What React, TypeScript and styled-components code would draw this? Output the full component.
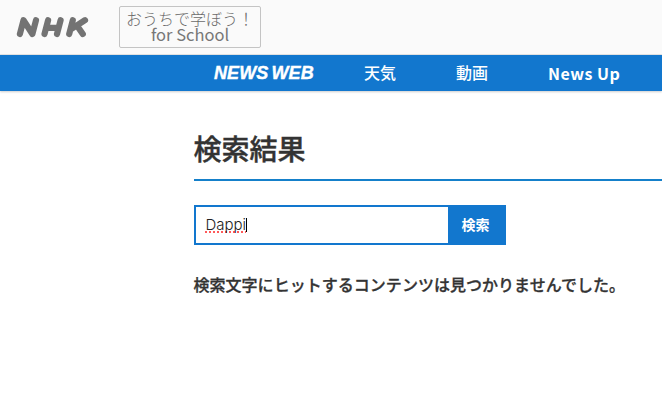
import { createGlobalStyle, styled } from "styled-components";

const App = () => {
  return (
    <>
      <GlobalStyle />
      <Header>
        <Logo viewBox="0 0 74 22" role="img" aria-label="NHK">
          <path d="M3.9 18 7.5 4.2 16.4 18 20 4.2M28.5 18 32.1 4.2M41 18 44.6 4.2M30.2 11.8H42.6M53.2 18 56.8 4.2M69 4.2 55.4 13M61.6 10.4 66.8 18" />
        </Logo>
        <SchoolLink>
          <SchoolText>おうちで学ぼう！</SchoolText>
          <SchoolName>for School</SchoolName>
        </SchoolLink>
      </Header>
      <Nav>
        <NewsWeb>NEWS WEB</NewsWeb>
        <NavItem>天気</NavItem>
        <NavItem>動画</NavItem>
        <NavItem $latin>News Up</NavItem>
      </Nav>
      <Main>
        <Title>検索結果</Title>
        <SearchForm onSubmit={(e) => e.preventDefault()}>
          <SearchField>
            <Query>Dappi</Query>
            <Caret />
          </SearchField>
          <SearchButton>検索</SearchButton>
        </SearchForm>
        <Message>検索文字にヒットするコンテンツは見つかりませんでした。</Message>
      </Main>
    </>
  );
};

export default App;

const GlobalStyle = createGlobalStyle`
  * {
    box-sizing: border-box;
  }

  body {
    margin: 0;
    background: #fff;
    color: #333;
    font-family: "Noto Sans CJK JP", sans-serif;
    overflow: hidden;
  }
`;

const Header = styled.header`
  display: flex;
  align-items: flex-start;
  height: 55px;
  padding: 6px 0 0 16px;
  background: #fafafa;
  border-bottom: 1px solid #e4e4e4;
`;

const Logo = styled.svg`
  width: 74px;
  height: 22px;
  margin-top: 10px;
  fill: none;
  stroke: #737373;
  stroke-width: 6.2;
  stroke-linecap: round;
  stroke-linejoin: round;
`;

const SchoolLink = styled.a`
  width: 142px;
  height: 42px;
  margin-left: 29px;
  padding-top: 3px;
  border: 1px solid #c4c4c4;
  border-radius: 2px;
  color: #777;
  font-size: 16px;
  line-height: 17px;
  white-space: nowrap;
`;

const SchoolText = styled.div`
  padding-left: 6px;
  color: #6a6a6a;
  font-weight: 300;
  line-height: 16px;
`;

const SchoolName = styled.div`
  font-size: 16.5px;
  text-align: center;
`;

const Nav = styled.nav`
  display: flex;
  align-items: center;
  height: 36px;
  padding-left: 214px;
  background: #1277ce;
  box-shadow: 0 1px 2px rgba(0, 0, 0, 0.2);
  color: #fff;
  white-space: nowrap;
`;

const NewsWeb = styled.a`
  width: 90px;
  font: italic bold 18px "Liberation Sans", sans-serif;
  letter-spacing: 0.1px;
  word-spacing: -2px;
  -webkit-text-stroke: 0.4px #fff;
`;

const NavItem = styled.a<{ $latin?: boolean }>`
  margin-left: 60px;
  padding-bottom: ${({ $latin }) => ($latin ? "0" : "2px")};
  font-size: 16px;
  font-weight: ${({ $latin }) => ($latin ? 700 : 500)};
  letter-spacing: ${({ $latin }) => ($latin ? "0.5px" : "0")};
  line-height: 34px;
`;

const Main = styled.main`
  padding: 37px 0 0 194px;
`;

const Title = styled.h1`
  height: 53px;
  margin: 0;
  border-bottom: 2px solid #1580ca;
  font-size: 28px;
  font-weight: 500;
  line-height: 40px;
  text-indent: -0.5px;
  -webkit-text-stroke: 0.4px #333;
`;

const SearchForm = styled.form`
  display: flex;
  width: 312px;
  height: 40px;
  margin-top: 24px;
`;

const SearchField = styled.div`
  display: flex;
  flex: 1;
  align-items: center;
  padding-left: 9.5px;
  border: 2px solid #1277ce;
  border-right: 0;
`;

const Query = styled.span`
  color: #222;
  font-family: Inter, sans-serif;
  font-size: 15px;
  font-weight: 300;
  line-height: 20px;
  text-decoration: underline dotted #ff5a5a 2px;
  text-decoration-skip-ink: none;
  text-underline-offset: 1px;
`;

const Caret = styled.span`
  width: 1px;
  height: 14px;
  margin-bottom: 1px;
  background: #000;
`;

const SearchButton = styled.button`
  width: 58px;
  padding: 0 3px 2px 0;
  border: 0;
  background: #1277ce;
  color: #fff;
  font: bold 14px "Noto Sans CJK JP", sans-serif;
`;

const Message = styled.p`
  margin: 27px 0 0;
  font-size: 16px;
  font-weight: 500;
  letter-spacing: 0.03px;
  line-height: 24px;
  text-indent: -0.5px;
  white-space: nowrap;
  -webkit-text-stroke: 0.3px #333;
`;
